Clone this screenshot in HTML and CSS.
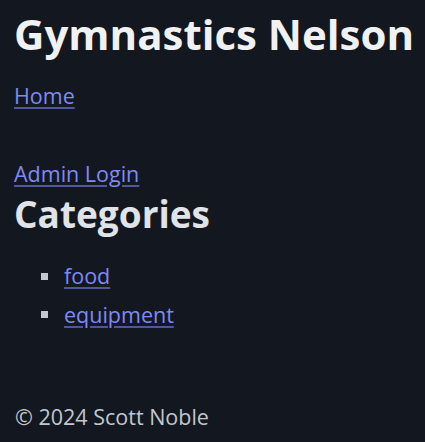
FILE: index.html
```html
<!DOCTYPE html>
<html lang="en">
<head>
<meta charset="utf-8">
<title>Gymnastics Nelson</title>
<link rel="stylesheet" href="styles.css">
</head>
<body>
<header class="site-header">
  <h1 class="site-title">Gymnastics Nelson</h1>
  <nav class="site-nav"><a href="#">Home</a></nav>
</header>
<main class="content">
  <p class="admin"><a href="#">Admin Login</a></p>
  <h2 class="section-title">Categories</h2>
  <ul class="categories">
    <li><a href="#">food</a></li>
    <li><a href="#">equipment</a></li>
  </ul>
</main>
<footer class="site-footer">© 2024 Scott Noble</footer>
</body>
</html>
```

FILE: styles.css
```css
html, body {
  margin: 0;
  padding: 0;
}
body {
  background: #13171f;
  color: #c2c7d0;
  font-family: "Open Sans", "Noto Sans", sans-serif;
  font-size: 21.5px;
  line-height: 1.5;
  padding: 0 4px 0 14px;
  min-height: 442px;
  box-sizing: border-box;
}
a {
  color: #7f8af5;
  text-decoration: underline;
  text-decoration-color: #4e5799;
  text-underline-offset: 3px;
}
.site-title {
  margin: 10px 0 23px;
  font-size: 42px;
  line-height: 1.125;
  font-weight: 700;
  color: #f0f1f3;
  white-space: nowrap;
}
.site-nav {
  margin: 0;
}
.content {
  padding-top: 45px;
}
.admin {
  margin: 0;
}
.section-title {
  margin: 3px 0 25px;
  font-size: 37px;
  line-height: 1.15;
  font-weight: 700;
  color: #e0e3e7;
}
.categories {
  list-style: none;
  margin: 0;
  padding-left: 27px;
}
.categories li {
  display: flex;
  align-items: center;
  margin-bottom: 6px;
}
.categories li::before {
  content: "";
  width: 7px;
  height: 7px;
  background: #c2c7d0;
  margin-right: 16px;
}
.site-footer {
  margin-top: 70px;
  padding-left: 1px;
}
```
